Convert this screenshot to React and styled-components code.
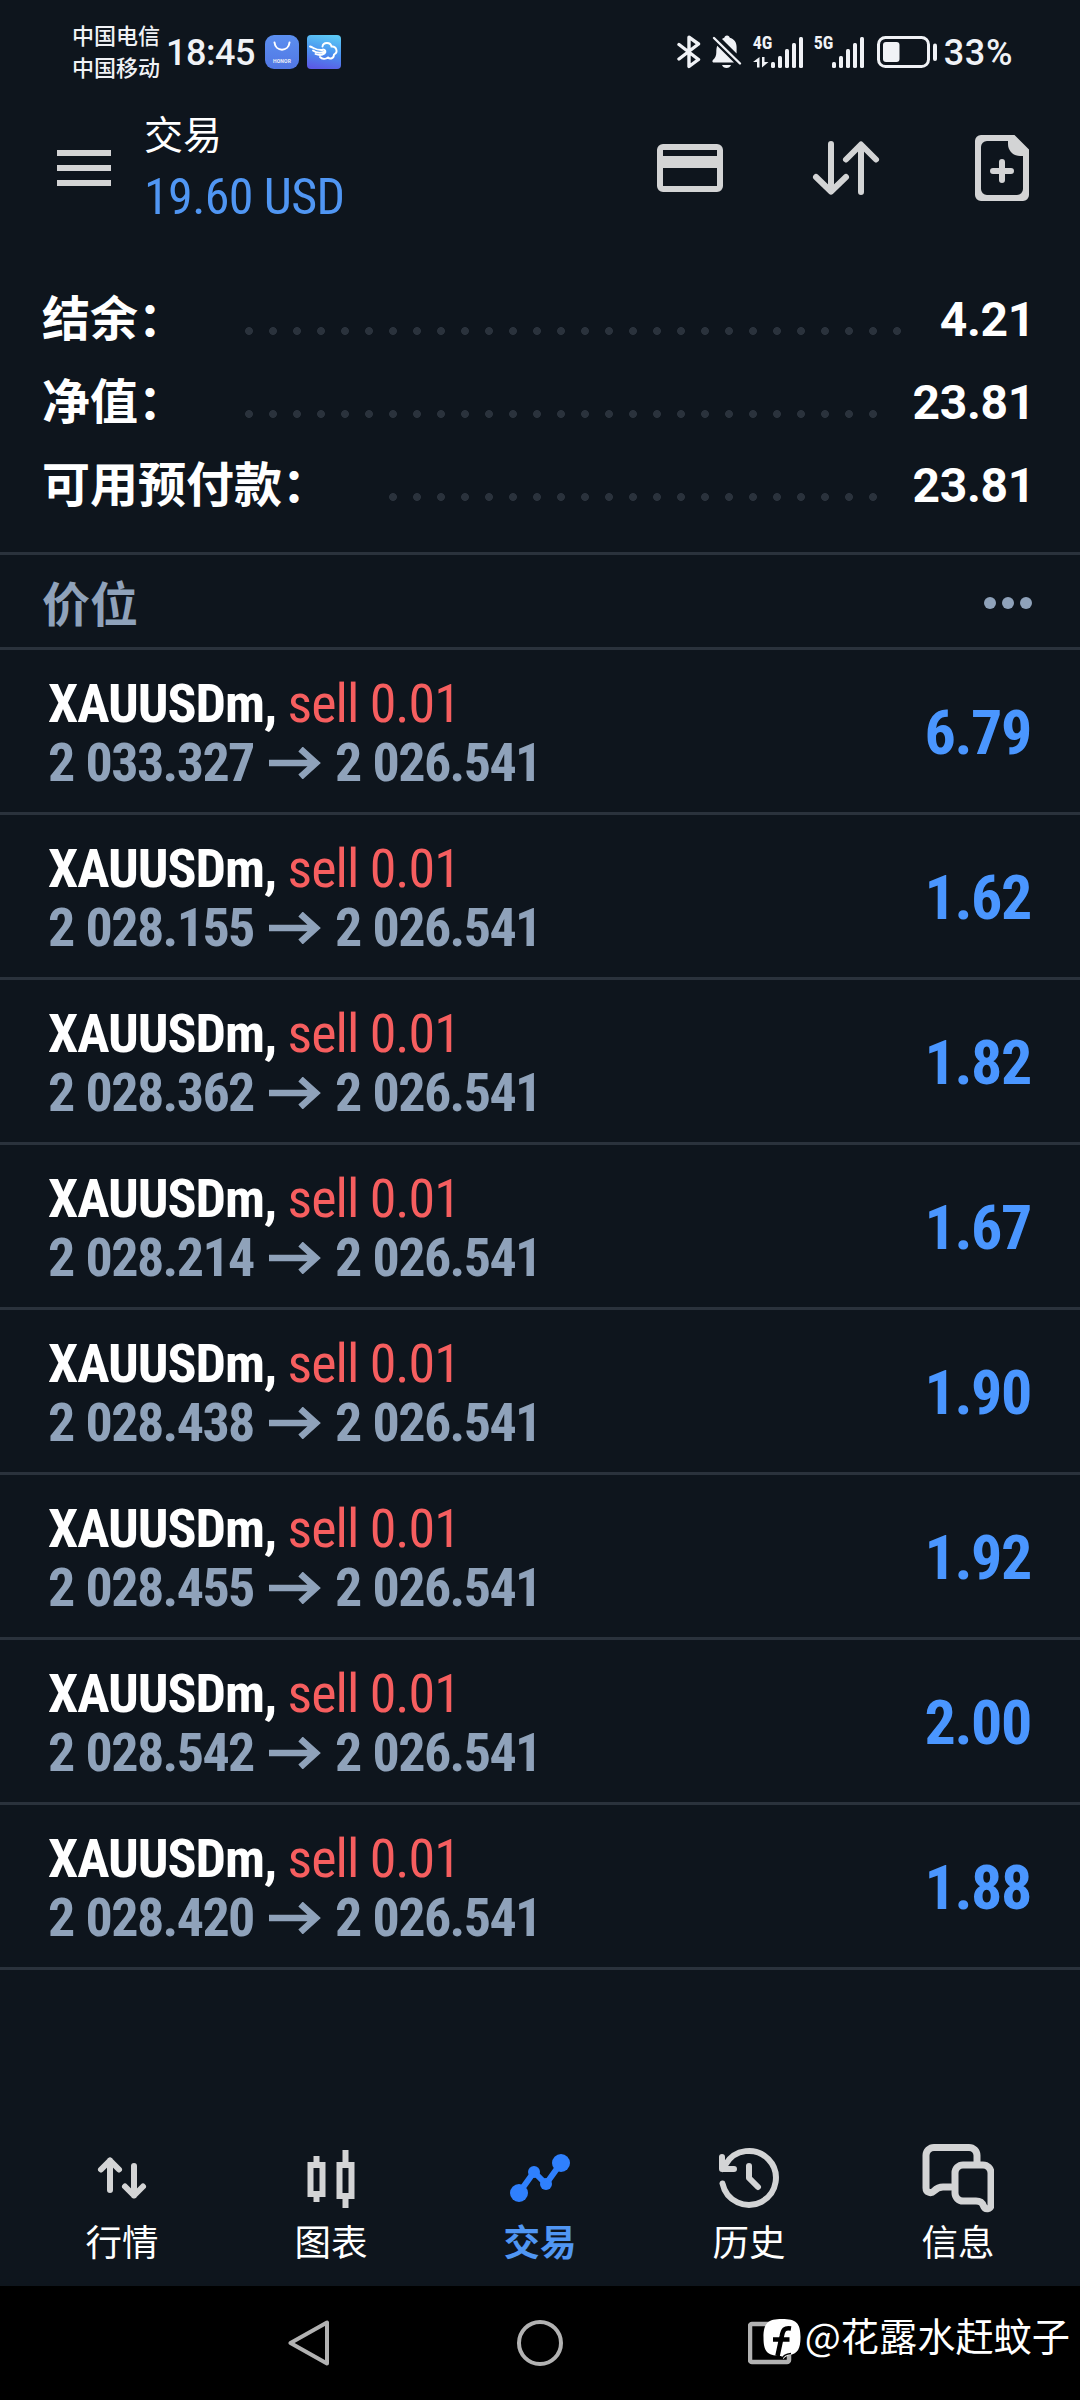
import React from "react";
import styled, { createGlobalStyle, css } from "styled-components";

const color = {
  bg: "#0e151d",
  line: "#2a323c",
  icon: "#d3d4d5",
  status: "#f0f2f6",
  muted: "#8fa2ba",
  blue: "#4a96ff",
  title: "#5096f3",
  active: "#2f80fe",
  red: "#f65e5f",
  system: "#b2b2b2",
};

const cjk = '"Noto Sans CJK SC", sans-serif';
const roboto = 'Roboto, "Liberation Sans", sans-serif';
const condensed = '"Roboto Condensed", Roboto, sans-serif';

const GlobalStyle = createGlobalStyle`
  * { box-sizing: border-box; }
  body { margin: 0; background: ${color.bg}; }
  svg { display: block; flex: none; }
`;

const Screen = styled.main`
  display: flex;
  flex-direction: column;
  width: 1080px;
  height: 2400px;
  overflow: hidden;
  background: ${color.bg};
  color: #fff;
  font-family: ${roboto};
  white-space: nowrap;
`;

/* Status bar */

const StatusBar = styled.header`
  display: flex;
  justify-content: space-between;
  align-items: center;
  height: 98px;
  padding: 6px 67px 0 72px;
  color: ${color.status};
`;

const StatusGroup = styled.div`
  display: flex;
  align-items: center;
`;

const Carriers = styled.div`
  display: flex;
  flex-direction: column;
  width: 88px;
  margin: -4px 6px 0 0;
  font: 500 22px/32px ${cjk};
`;

const Clock = styled.span`
  width: 92px;
  padding-top: 1px;
  font: 500 36px/40px ${roboto};
  letter-spacing: -0.5px;
`;

const AppBadges = styled.div`
  display: flex;
  gap: 8px;
  margin-left: 7px;
`;

const HonorBadge = styled.div`
  display: flex;
  flex-direction: column;
  align-items: center;
  width: 34px;
  height: 34px;
  padding-top: 6px;
  border-radius: 9px;
  background: linear-gradient(#5b8ff0, #5277e4);
`;

const HonorName = styled.span`
  margin-top: 6px;
  font: 700 5px/7px ${roboto};
  letter-spacing: 0.2px;
`;

const Signal = styled.div`
  display: flex;
  align-items: flex-end;
  width: ${(p) => p.$width}px;
  height: 32px;
`;

const NetworkType = styled.div`
  display: flex;
  flex-direction: column;
  justify-content: space-between;
  width: 18px;
  height: 32px;
  font: 700 18px/14px ${condensed};
`;

const Bars = styled.div`
  display: flex;
  align-items: flex-end;
  gap: 3px;
`;

const Bar = styled.i`
  width: 4px;
  height: ${(p) => p.$height}px;
  border-radius: 1.5px;
  background: ${color.status};
`;

const Percent = styled.span`
  margin-left: 6px;
  padding-top: 1px;
  font: 500 36px/40px ${roboto};
  letter-spacing: 0.6px;
`;

/* App bar */

const AppBar = styled.div`
  display: flex;
  align-items: center;
  height: 140px;
  padding: 0 42px 0 57px;
  color: ${color.icon};
`;

const Titles = styled.div`
  display: flex;
  flex-direction: column;
  flex: 1;
  gap: 10px;
  margin: -2px 0 0 33px;
`;

const Title = styled.h1`
  margin: 0;
  color: #fff;
  font: 400 39px/50px ${cjk};
`;

const Profit = styled.span`
  color: ${color.title};
  font: 400 50px/60px ${condensed};
  letter-spacing: -0.6px;
`;

const Actions = styled.div`
  display: flex;
  gap: 84px;
`;

/* Account summary */

const Summary = styled.section`
  padding: 40px 45px 25px 42px;
`;

const SummaryRow = styled.div`
  display: flex;
  align-items: center;
  height: 83px;
`;

const SummaryLabel = styled.span`
  padding-bottom: 9px;
  font: 700 48px/70px ${cjk};
`;

const Leader = styled.span`
  flex: 1;
  height: 8px;
  margin: 23px 25px 0 51px;
  background: radial-gradient(circle, ${color.line} 3.6px, transparent 4.2px) 0 0 / 24px 8px repeat-x;
`;

const SummaryValue = styled.span`
  font: 700 48px/70px ${roboto};
  letter-spacing: -0.3px;
`;

/* Positions */

const SectionHeader = styled.div`
  display: flex;
  justify-content: space-between;
  align-items: center;
  height: 98px;
  padding: 0 48px 0 42px;
  border-top: 3px solid ${color.line};
  border-bottom: 3px solid ${color.line};
  color: ${color.muted};
`;

const SectionTitle = styled.h2`
  margin: 0;
  font: 700 48px/70px ${cjk};
`;

const MoreDots = styled.div`
  display: flex;
  gap: 6px;
  padding-top: 3px;
`;

const Dot = styled.i`
  width: 12px;
  height: 12px;
  border-radius: 50%;
  background: ${color.muted};
`;

const PositionList = styled.ul`
  flex: 1;
  margin: 0;
  padding: 0;
  list-style: none;
`;

const Position = styled.li`
  display: flex;
  justify-content: space-between;
  align-items: center;
  height: 165px;
  padding: 3px 49px 0 48px;
  border-bottom: 3px solid ${color.line};
  font-family: ${condensed};
`;

const Deal = styled.div`
  display: flex;
  flex-direction: column;
`;

const Instrument = styled.div`
  font-size: 54px;
  font-weight: 700;
  line-height: 59px;
  letter-spacing: -1.05px;
`;

const Side = styled.span`
  color: ${color.red};
  font-weight: 400;
  letter-spacing: -1px;
`;

const Prices = styled.div`
  display: flex;
  align-items: center;
  color: ${color.muted};
  font-size: 54px;
  font-weight: 700;
  line-height: 59px;
  letter-spacing: -1.6px;
  word-spacing: 1px;
`;

const Price = styled.span`
  width: ${(p) => (p.$open ? "221px" : "auto")};
`;

const ArrowSlot = styled.span`
  width: 66px;
  padding-top: 1px;
`;

const Gain = styled.span`
  color: ${color.blue};
  font-size: 62px;
  font-weight: 700;
  line-height: 70px;
  letter-spacing: -1.4px;
`;

/* Bottom tabs */

const TabBar = styled.nav`
  display: grid;
  grid-template-columns: repeat(5, 209px);
  justify-content: center;
  height: 144px;
`;

const Tab = styled.div`
  display: flex;
  flex-direction: column;
  align-items: center;
  gap: 3px;
  color: ${color.icon};
  ${(p) =>
    p.$active &&
    css`
      color: ${color.active};
    `}
`;

const TabLabel = styled.span`
  color: ${(p) => (p.$active ? color.title : "#fff")};
  font: ${(p) => (p.$active ? 700 : 400)} 36.5px/48px ${cjk};
`;

/* System navigation */

const SystemNav = styled.div`
  position: relative;
  display: flex;
  justify-content: space-between;
  height: 114px;
  padding: 34px 288px 0;
  background: #000;
`;

const Watermark = styled.div`
  position: absolute;
  top: 22px;
  right: 10px;
  display: flex;
  align-items: center;
  gap: 4px;
  color: #fff;
  font: 400 38.2px/54px ${cjk};
`;

const LogoSlot = styled.span`
  padding-top: 8px;
`;

const BluetoothIcon = () => (
  <svg width="24" height="34" viewBox="0 0 24 34" fill="none" stroke="currentColor" strokeWidth="3.4" strokeLinejoin="round" strokeLinecap="round">
    <path d="M2 9.5 21.5 24.5 12 31.5V2.2L21.5 9 2 24" />
  </svg>
);

const MutedBellIcon = () => (
  <svg width="30" height="34" viewBox="0 0 30 34" fill="currentColor">
    <path d="M15 .5c1.6 0 2.6 1 2.8 2.3 4.3 1.2 6.8 4.5 6.8 9.2v6.5L10 4.1c.8-.6 1.5-1 2.300-1.300C12.500 1.500 13.400.5 15 .5ZM5.200 10.800 22 27.500H1.200c-1-.3-1-1.600-.3-2.500 2.300-2.200 3.400-4 3.400-7.500 0-2.500.2-5 .9-6.700Z" />
    <path d="M10 30h9c-.7 2-2.400 3-4.500 3S10.700 32 10 30Z" />
    <path d="M2 3 28 28.500" fill="none" stroke="currentColor" strokeWidth="2.400" strokeLinecap="round" />
  </svg>
);

const DataArrowsIcon = () => (
  <svg width="16" height="11" viewBox="0 0 16 11" fill="currentColor">
    <path d="M6.500 0V10.500H4V5H0ZM9 0H11.500L11.500 5H15.500L9 10.500Z" />
  </svg>
);

const BatteryIcon = () => (
  <svg width="61" height="32" viewBox="0 0 61 32">
    <rect x="1.500" y="1.500" width="50" height="29" rx="7" fill="none" stroke="currentColor" strokeWidth="3" />
    <rect x="6" y="6" width="16.500" height="20" rx="3" fill="currentColor" />
    <rect x="56" y="7.500" width="4" height="17.500" rx="2" fill="currentColor" />
  </svg>
);

const SmileIcon = () => (
  <svg width="20" height="11" viewBox="0 0 20 11" fill="none" stroke="#fff" strokeWidth="2" strokeLinecap="round">
    <path d="M2.500 1.500c1 9.500 14 9.500 15 0" />
  </svg>
);

const CloudBadge = () => (
  <svg width="34" height="34" viewBox="0 0 34 34">
    <defs>
      <linearGradient id="sky" x1="0.600" y1="0" x2="0.400" y2="1">
        <stop offset="0" stopColor="#5cc8f5" />
        <stop offset="0.500" stopColor="#4a92ef" />
        <stop offset="1" stopColor="#5b5be6" />
      </linearGradient>
    </defs>
    <rect width="34" height="34" rx="4" fill="url(#sky)" />
    <g fill="none" stroke="#fff" strokeWidth="1.900" strokeLinecap="round">
      <path d="M15.500 11.500c.5-4.500 8-5 9 0 5-.5 7 6 2.500 8 0 4-4 5-6 3-2.500 2-6 1.500-8-.5" />
      <path d="M3 11.500c4 1 5 4 12.500 3.500M6 15.500c3 2.500 6 3 11 1.500M8.500 19c3.500 1.500 7 1 9-.5 2-2 .5-4-1.500-4" />
    </g>
  </svg>
);

const MenuIcon = () => (
  <svg width="54" height="36" viewBox="0 0 54 36" fill="currentColor">
    <path d="M0 0H54V6H0ZM0 15H54V21H0ZM0 30H54V36H0Z" />
  </svg>
);

const Icon = ({ children, ...rest }) => (
  <svg width="72" height="72" viewBox="0 0 72 72" fill="none" stroke="currentColor" strokeWidth="6" strokeLinecap="round" strokeLinejoin="round" {...rest}>
    {children}
  </svg>
);

const CardIcon = () => (
  <Icon>
    <rect x="6" y="15" width="60" height="42" rx="3" />
    <path d="M6 30H66" strokeWidth="12" strokeLinecap="butt" />
  </Icon>
);

const SortIcon = () => (
  <Icon>
    <path d="M21 12V59M6 45 21 59.500 36 45M51 60V13M36 27.500 51 12.500 66 27.500" />
  </Icon>
);

const NewOrderIcon = () => (
  <Icon>
    <path fillRule="evenodd" stroke="none" fill="currentColor" d="M15 3H48.500L63 17.500V63a6 6 0 0 1-6 6H15a6 6 0 0 1-6-6V9a6 6 0 0 1 6-6ZM21 9a6 6 0 0 0-6 6V57a6 6 0 0 0 6 6H51a6 6 0 0 0 6-6V24H54C47 24 42 18.500 42 12V9Z" />
    <path d="M36 30V48M27 39H45" />
  </Icon>
);

const QuotesIcon = () => (
  <Icon>
    <path d="M24 48V18.500M15 27.500 24 18.500 33 27.500M48 24V53.500M39 44.500 48 53.500 57 44.500" />
  </Icon>
);

const ChartIcon = () => (
  <Icon strokeLinecap="butt" strokeLinejoin="miter">
    <path d="M15.500 23H27.500V52H15.500ZM21.500 14V21M21.500 54V60M44.500 23H56.500V54H44.500ZM50.500 8V21M50.500 56V66" />
  </Icon>
);

const TradeIcon = () => (
  <Icon>
    <path d="M15 51 30 30 42 42 57 21" />
    <g fill="currentColor" stroke="none">
      <circle cx="15" cy="51" r="9" />
      <circle cx="30" cy="30" r="6" />
      <circle cx="42" cy="42" r="6" />
      <circle cx="57" cy="21" r="9" />
    </g>
  </Icon>
);

const HistoryIcon = () => (
  <Icon>
    <path d="M9.500 41.500A27 27 0 1 0 12.500 22.500L9.500 27M9 15V27H21M36 24V36L45 45" />
  </Icon>
);

const MessagesIcon = () => (
  <Icon strokeWidth="7">
    <path d="M55 20V13.500A8 8 0 0 0 47 5.500H12A8 8 0 0 0 4 13.500V46C4 50.500 9 52 12 49C15 46 17 45 21 45H29" />
    <path d="M41 23H61A8 8 0 0 1 69 31V63C69 67.500 63 68 61.500 64C60.500 61 59 59 54 59H41A8 8 0 0 1 33 51V31A8 8 0 0 1 41 23Z" />
  </Icon>
);

const PriceArrow = () => (
  <svg width="52" height="32" viewBox="0 0 52 32" fill="none" stroke="currentColor" strokeWidth="6.500">
    <path d="M0 16H47M31.500 2 47 16 31.500 30" />
  </svg>
);

const BackIcon = () => (
  <svg width="42" height="46" viewBox="0 0 42 46" fill="none" stroke={color.system} strokeWidth="4" strokeLinejoin="round">
    <path d="M39 2.500V43.500L2.500 23Z" />
  </svg>
);

const HomeIcon = () => (
  <svg width="48" height="46" viewBox="0 0 48 46" fill="none" stroke={color.system} strokeWidth="4">
    <circle cx="25" cy="23" r="21" />
  </svg>
);

const RecentsIcon = () => (
  <svg width="44" height="46" viewBox="0 0 44 46" fill="none" stroke={color.system} strokeWidth="4.500">
    <rect x="2" y="4" width="39" height="38" rx="2" />
  </svg>
);

const FlashLogo = () => (
  <svg width="38" height="40" viewBox="0 0 38 40">
    <path fill="#fff" d="M19 0C33 0 37.500 4 37.500 18C37.500 30 34.500 34.500 27 36C24 36.500 22 38 20.500 40C19 38.500 19.500 37 17 37C4 36.500 .5 32 .5 18.500C.5 4 5 0 19 0Z" />
    <path fill="none" stroke="#000" strokeWidth="4.600" d="M28 9.500C21.500 8.500 20 10.500 18.800 17L14.500 37M10 20.500H26.500" />
    <path fill="none" stroke="#000" strokeWidth="1.500" d="M19 40C20 36 23 35 28 34.500" />
  </svg>
);

const summary = [
  ["结余：", "4.21"],
  ["净值：", "23.81"],
  ["可用预付款：", "23.81"],
];

const positions = [
  ["2 033.327", "6.79"],
  ["2 028.155", "1.62"],
  ["2 028.362", "1.82"],
  ["2 028.214", "1.67"],
  ["2 028.438", "1.90"],
  ["2 028.455", "1.92"],
  ["2 028.542", "2.00"],
  ["2 028.420", "1.88"],
];

const tabs = [
  ["行情", QuotesIcon],
  ["图表", ChartIcon],
  ["交易", TradeIcon],
  ["历史", HistoryIcon],
  ["信息", MessagesIcon],
];

const SignalStrength = ({ type, width, data }) => (
  <Signal $width={width}>
    <NetworkType>
      {type}
      {data && <DataArrowsIcon />}
    </NetworkType>
    <Bars>
      {[6, 12, 19, 25, 31].map((h) => (
        <Bar key={h} $height={h} />
      ))}
    </Bars>
  </Signal>
);

const BellSlot = styled.div`
  margin: 0 11px;
`;

export default function App() {
  return (
    <Screen>
      <GlobalStyle />
      <StatusBar>
        <StatusGroup>
          <Carriers>
            <span>中国电信</span>
            <span>中国移动</span>
          </Carriers>
          <Clock>18:45</Clock>
          <AppBadges>
            <HonorBadge>
              <SmileIcon />
              <HonorName>HONOR</HonorName>
            </HonorBadge>
            <CloudBadge />
          </AppBadges>
        </StatusGroup>
        <StatusGroup>
          <BluetoothIcon />
          <BellSlot>
            <MutedBellIcon />
          </BellSlot>
          <SignalStrength type="4G" width={61} data />
          <SignalStrength type="5G" width={63} />
          <BatteryIcon />
          <Percent>33%</Percent>
        </StatusGroup>
      </StatusBar>

      <AppBar>
        <MenuIcon />
        <Titles>
          <Title>交易</Title>
          <Profit>19.60 USD</Profit>
        </Titles>
        <Actions>
          <CardIcon />
          <SortIcon />
          <NewOrderIcon />
        </Actions>
      </AppBar>

      <Summary>
        {summary.map(([label, value]) => (
          <SummaryRow key={label}>
            <SummaryLabel>{label}</SummaryLabel>
            <Leader />
            <SummaryValue>{value}</SummaryValue>
          </SummaryRow>
        ))}
      </Summary>

      <SectionHeader>
        <SectionTitle>价位</SectionTitle>
        <MoreDots>
          <Dot />
          <Dot />
          <Dot />
        </MoreDots>
      </SectionHeader>

      <PositionList>
        {positions.map(([open, gain]) => (
          <Position key={open}>
            <Deal>
              <Instrument>
                XAUUSDm, <Side>sell 0.01</Side>
              </Instrument>
              <Prices>
                <Price $open>{open}</Price>
                <ArrowSlot>
                  <PriceArrow />
                </ArrowSlot>
                <Price>2 026.541</Price>
              </Prices>
            </Deal>
            <Gain>{gain}</Gain>
          </Position>
        ))}
      </PositionList>

      <TabBar>
        {tabs.map(([label, TabIcon]) => {
          const active = label === "交易";
          return (
            <Tab key={label} $active={active}>
              <TabIcon />
              <TabLabel $active={active}>{label}</TabLabel>
            </Tab>
          );
        })}
      </TabBar>

      <SystemNav>
        <BackIcon />
        <HomeIcon />
        <RecentsIcon />
        <Watermark>
          <LogoSlot>
            <FlashLogo />
          </LogoSlot>
          <span>@花露水赶蚊子</span>
        </Watermark>
      </SystemNav>
    </Screen>
  );
}
